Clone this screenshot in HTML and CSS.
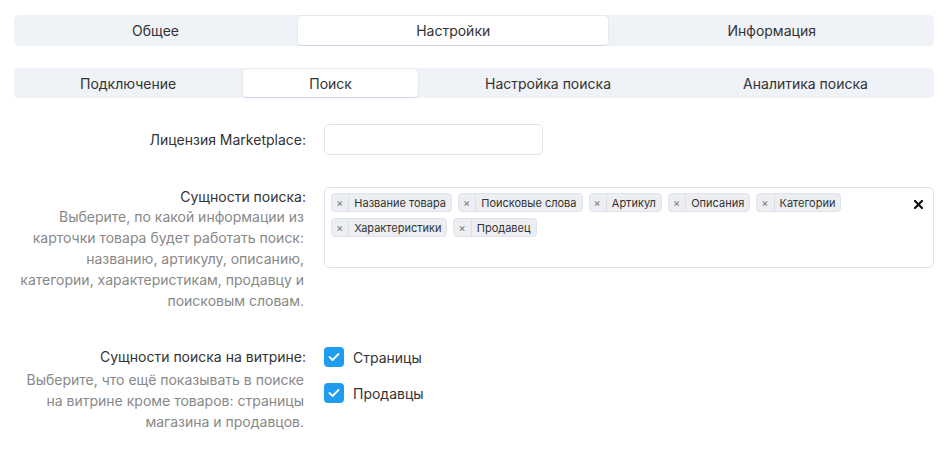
FILE: index.html
```html
<!DOCTYPE html>
<html lang="ru">
<head>
    <meta charset="UTF-8">
    <meta name="viewport" content="width=device-width, initial-scale=1.0">
    <title>Поиск</title>
    <link rel="stylesheet" href="styles.css">
</head>
<body>
<div class="page">

    <div class="tabs">
        <div class="tab">Общее</div>
        <div class="tab active">Настройки</div>
        <div class="tab">Информация</div>
    </div>

    <div class="tabs sub">
        <div class="tab">Подключение</div>
        <div class="tab active">Поиск</div>
        <div class="tab">Настройка поиска</div>
        <div class="tab">Аналитика поиска</div>
    </div>

    <div class="form">
        <div class="row row-license">
            <div class="label">
                <div class="label-title">Лицензия Marketplace:</div>
            </div>
            <div class="control">
                <input type="text" class="input">
            </div>
        </div>

        <div class="row row-entities">
            <div class="label">
                <div class="label-title">Сущности поиска:</div>
                <div class="label-hint">Выберите, по какой информации из карточки товара будет работать поиск: названию, артикулу, описанию, категории, характеристикам, продавцу и поисковым словам.</div>
            </div>
            <div class="control">
                <div class="tagbox">
                    <div class="tags">
                        <span class="tag"><span class="tag-x">×</span><span class="tag-text">Название товара</span></span>
                        <span class="tag"><span class="tag-x">×</span><span class="tag-text">Поисковые слова</span></span>
                        <span class="tag"><span class="tag-x">×</span><span class="tag-text">Артикул</span></span>
                        <span class="tag"><span class="tag-x">×</span><span class="tag-text">Описания</span></span>
                        <span class="tag"><span class="tag-x">×</span><span class="tag-text">Категории</span></span>
                        <span class="tag"><span class="tag-x">×</span><span class="tag-text">Характеристики</span></span>
                        <span class="tag"><span class="tag-x">×</span><span class="tag-text">Продавец</span></span>
                    </div>
                    <span class="clear">
                        <svg width="9" height="9" viewBox="0 0 9 9"><path d="M1 1 L8 8 M8 1 L1 8" stroke="#111" stroke-width="2.2" stroke-linecap="square"/></svg>
                    </span>
                </div>
            </div>
        </div>

        <div class="row row-showcase">
            <div class="label">
                <div class="label-title">Сущности поиска на витрине:</div>
                <div class="label-hint">Выберите, что ещё показывать в поиске на витрине кроме товаров: страницы магазина и продавцов.</div>
            </div>
            <div class="control checks">
                <label class="check">
                    <span class="box"><svg width="12" height="10" viewBox="0 0 12 10"><path d="M1.5 5 L4.6 8 L10.5 2" fill="none" stroke="#fff" stroke-width="1.8" stroke-linecap="round" stroke-linejoin="round"/></svg></span>
                    Страницы
                </label>
                <label class="check">
                    <span class="box"><svg width="12" height="10" viewBox="0 0 12 10"><path d="M1.5 5 L4.6 8 L10.5 2" fill="none" stroke="#fff" stroke-width="1.8" stroke-linecap="round" stroke-linejoin="round"/></svg></span>
                    Продавцы
                </label>
            </div>
        </div>
    </div>

</div>
</body>
</html>
```

FILE: styles.css
```css
body {
    margin: 0;
    font-family: Inter, "Noto Sans", sans-serif;
    color: #2b2b2b;
    background: #fff;
}
.page {
    padding: 15px 15px 20px 14px;
}
.tabs {
    display: flex;
    background-color: #eff2f6;
    border-radius: 5px;
    height: 31px;
    font-size: 14px;
}
.tabs.sub {
    margin-top: 22px;
    height: 30px;
}
.tab {
    flex: 1 1 auto;
    display: flex;
    align-items: center;
    justify-content: center;
    color: #333;
}
.tab.active {
    background-color: #fff;
    border-radius: 5px;
    border: 1px solid #e3e8ef;
    border-bottom-color: #c9d3e3;
    box-sizing: border-box;
}
.form {
    margin-top: 26px;
}
.row {
    display: grid;
    grid-template-columns: 292px 1fr;
    column-gap: 18px;
}
.row-entities {
    margin-top: 32px;
}
.row-showcase {
    margin-top: 36px;
}
.label {
    text-align: right;
}
.label-title {
    font-size: 14px;
    color: #333;
    line-height: 20px;
}
.row-license .label-title {
    line-height: 31px;
}
.label-hint {
    font-size: 14px;
    color: #888;
    line-height: 21px;
    margin-top: -1px;
    margin-left: 4px;
    padding-right: 2px;
}
.row-showcase .label-hint {
    margin-top: 2px;
}
.input {
    width: 219px;
    height: 31px;
    box-sizing: border-box;
    border: 1px solid #dfe5ee;
    border-radius: 5px;
    outline: none;
    font-family: inherit;
}
.tagbox {
    display: flex;
    align-items: flex-start;
    border: 1px solid #dfe5ee;
    border-radius: 5px;
    height: 81px;
    box-sizing: border-box;
    padding: 5px 10px 5px 6px;
}
.tags {
    flex: 1;
    display: flex;
    flex-wrap: wrap;
    gap: 6px 6px;
}
.tag {
    display: inline-flex;
    align-items: stretch;
    height: 19px;
    box-sizing: border-box;
    background-color: #eceef2;
    border: 1px solid #dfe3ea;
    border-radius: 4px;
    font-size: 11px;
    color: #333;
}
.tag-x {
    display: flex;
    align-items: center;
    padding: 0 5px 0 4px;
    color: #777;
    font-size: 11px;
    border-right: 1px solid #dbe0e8;
}
.tag-text {
    display: flex;
    align-items: center;
    padding: 0 5px 0 5px;
}
.clear {
    margin-top: 7px;
    display: flex;
}
.checks {
    display: flex;
    flex-direction: column;
    gap: 16px;
}
.check {
    display: flex;
    align-items: center;
    gap: 9px;
    font-size: 14px;
    color: #333;
}
.box {
    width: 20px;
    height: 20px;
    border-radius: 4px;
    background-color: #1f9cf0;
    display: flex;
    align-items: center;
    justify-content: center;
}
```
